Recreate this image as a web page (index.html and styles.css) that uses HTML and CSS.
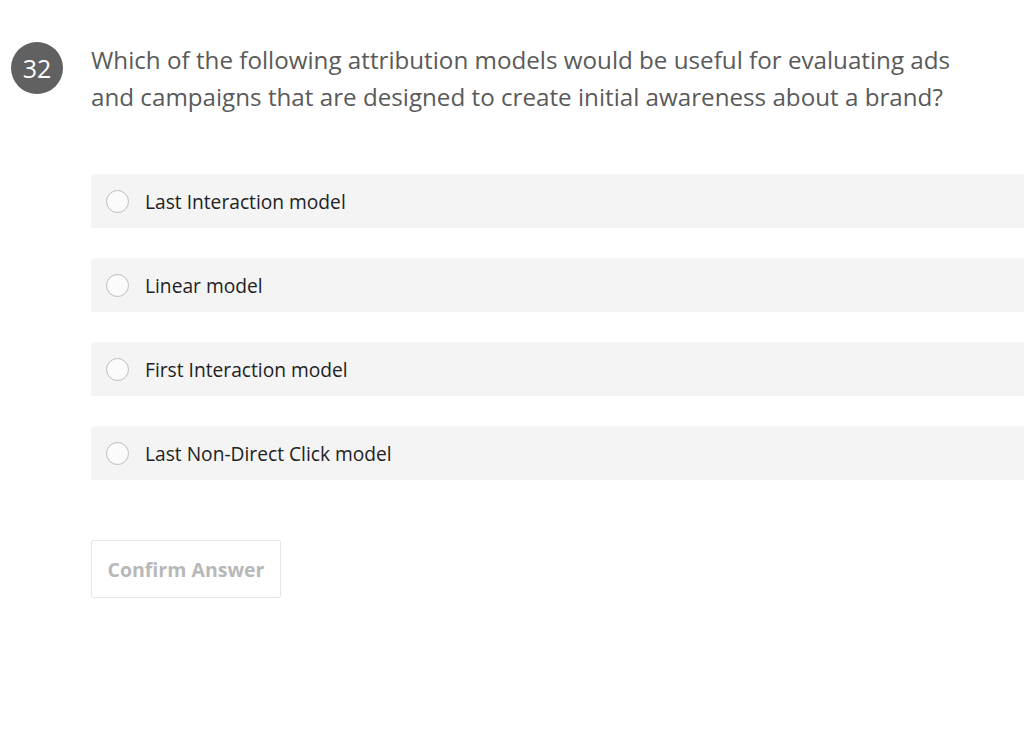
FILE: index.html
```html
<!DOCTYPE html>
<html lang="en">
<head>
<meta charset="utf-8">
<title>Question 32</title>
<link rel="stylesheet" href="styles.css">
</head>
<body>
<div class="question">
  <div class="badge">32</div>
  <div class="content">
    <p class="prompt">Which of the following attribution models would be useful for evaluating ads and campaigns that are designed to create initial awareness about a brand?</p>
    <ul class="options">
      <li class="option"><span class="radio"></span><span class="label">Last Interaction model</span></li>
      <li class="option"><span class="radio"></span><span class="label">Linear model</span></li>
      <li class="option"><span class="radio"></span><span class="label">First Interaction model</span></li>
      <li class="option"><span class="radio"></span><span class="label">Last Non-Direct Click model</span></li>
    </ul>
    <button class="confirm" type="button">Confirm Answer</button>
  </div>
</div>
</body>
</html>
```
FILE: styles.css
```css
html, body {
  margin: 0;
  padding: 0;
  background: #ffffff;
}
body {
  font-family: "Open Sans", "Liberation Sans", sans-serif;
  overflow: hidden;
}
.question {
  display: flex;
  align-items: flex-start;
  padding: 42px 0 0 11px;
  gap: 28px;
}
.badge {
  flex: 0 0 52px;
  width: 52px;
  height: 52px;
  border-radius: 50%;
  background: #616161;
  color: #ffffff;
  font-size: 25px;
  line-height: 52px;
  text-align: center;
}
.content {
  flex: 1;
  min-width: 0;
}
.prompt {
  margin: -1px 0 0 0;
  font-size: 24.2px;
  line-height: 37px;
  color: #5a5a5a;
  padding-right: 40px;
}
.options {
  list-style: none;
  margin: 59px 0 0 0;
  padding: 0;
  display: flex;
  flex-direction: column;
  gap: 30px;
}
.option {
  display: flex;
  align-items: center;
  height: 54px;
  background: #f4f4f4;
  border-radius: 3px 0 0 3px;
  padding-left: 15px;
  gap: 16px;
}
.radio {
  box-sizing: border-box;
  width: 23px;
  height: 23px;
  border: 1.5px solid #bdbdbd;
  border-radius: 50%;
  background: #fbfbfb;
  flex: 0 0 auto;
}
.label {
  font-size: 19.2px;
  color: #222222;
}
.confirm {
  margin-top: 60px;
  height: 58px;
  width: 190px;
  padding: 0;
  background: #ffffff;
  border: 1px solid #e6e6e6;
  border-radius: 2px;
  font-family: "Open Sans", "Liberation Sans", sans-serif;
  font-weight: 700;
  font-size: 19.5px;
  color: #b8b8b8;
}
```
